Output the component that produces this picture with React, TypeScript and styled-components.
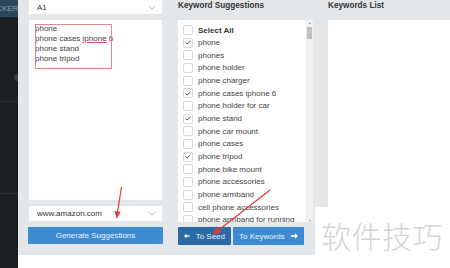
import styled, { createGlobalStyle } from 'styled-components';

const GlobalStyle = createGlobalStyle`
  html, body {
    margin: 0;
    padding: 0;
    background: #ffffff;
  }
  body {
    font-family: 'Liberation Sans', Arial, sans-serif;
  }
`;

type Suggestion = {
  text: string;
  checked?: boolean;
};

const suggestions: Suggestion[] = [
  { text: 'phone', checked: true },
  { text: 'phones' },
  { text: 'phone holder' },
  { text: 'phone charger' },
  { text: 'phone cases iphone 6', checked: true },
  { text: 'phone holder for car' },
  { text: 'phone stand', checked: true },
  { text: 'phone car mount' },
  { text: 'phone cases' },
  { text: 'phone tripod', checked: true },
  { text: 'phone bike mount' },
  { text: 'phone accessories' },
  { text: 'phone armband' },
  { text: 'cell phone accessories' },
  { text: 'phone armband for running' },
];

const Page = styled.div`
  position: relative;
  display: flex;
  width: 450px;
  height: 268px;
  overflow: hidden;
`;

const Sidebar = styled.aside`
  width: 18px;
  flex-shrink: 0;
  display: flex;
  flex-direction: column;
  background: #1c1f22;
  overflow: hidden;
`;

const Brand = styled.div`
  height: 17px;
  display: flex;
  justify-content: flex-end;
  align-items: center;
  background: #2b4658;
  color: #7f9cb1;
  font-size: 8px;
  letter-spacing: -0.2px;
  white-space: nowrap;
`;

const SideSection = styled.div<{ $h: number }>`
  height: ${(p) => p.$h}px;
  border-bottom: 1px solid #2b2f34;
  display: flex;
  justify-content: flex-end;
  align-items: flex-start;
`;

const Dot = styled.div`
  width: 7px;
  height: 7px;
  margin-top: 57px;
  margin-right: -3px;
  border-radius: 50%;
  background: #3b3f44;
`;

const Main = styled.main`
  flex: 1;
  display: flex;
  flex-direction: column;
`;

const Workspace = styled.div`
  height: 255px;
  background: #e4e7ea;
  display: grid;
  grid-template-columns: 135px 135px 1fr;
  column-gap: 15px;
  padding-left: 10px;
  box-sizing: border-box;
`;

const Column = styled.section`
  display: flex;
  flex-direction: column;
  min-width: 0;
`;

const Select = styled.div<{ $h: number; $mt?: number }>`
  height: ${(p) => p.$h}px;
  margin-top: ${(p) => p.$mt ?? 0}px;
  margin-left: 1px;
  margin-right: 1px;
  background: #ffffff;
  display: flex;
  align-items: center;
  justify-content: space-between;
  padding: 0 6px 0 8px;
  font-size: 8px;
  color: #333;
  flex-shrink: 0;
`;

const Chevron = () => (
  <svg width="8" height="5" viewBox="0 0 8 5">
    <polyline points="0.5,0.8 4,4.2 7.5,0.8" fill="none" stroke="#9a9ea3" strokeWidth="0.8" />
  </svg>
);

const SeedBox = styled.div`
  position: relative;
  height: 180px;
  margin: 6px 1px 0;
  background: #ffffff;
  padding: 4px 6px;
  box-sizing: border-box;
  font-size: 8px;
  line-height: 10px;
  color: #444;
`;

const SeedLine = styled.div`
  white-space: nowrap;
`;

const Misspelled = styled.span`
  text-decoration: underline;
  text-decoration-color: #d9534f;
  text-decoration-thickness: 1px;
  text-underline-offset: 1px;
`;

const Highlight = styled.div`
  position: absolute;
  left: 6px;
  top: 4px;
  width: 77px;
  height: 45px;
  border: 1px solid #e58a8a;
  box-sizing: border-box;
`;

const Button = styled.button<{ $tone: 'primary' | 'dark' }>`
  height: 18px;
  border: none;
  border-radius: 1px;
  padding: 0 6px;
  background: ${(p) => (p.$tone === 'dark' ? '#2c6aa5' : '#3e8bd2')};
  color: #e6f0fa;
  font-family: 'Liberation Sans', Arial, sans-serif;
  font-size: 8px;
  display: flex;
  align-items: center;
  justify-content: center;
  gap: 6px;
  white-space: nowrap;
`;

const WideButton = styled(Button)`
  margin-top: 6px;
  height: 17px;
`;

const Heading = styled.h3`
  height: 20px;
  margin: 0;
  padding-top: 1px;
  box-sizing: border-box;
  font-size: 8.2px;
  font-weight: bold;
  color: #333;
`;

const ListBox = styled.div`
  height: 202px;
  background: #ffffff;
  display: flex;
  overflow: hidden;
`;

const List = styled.div`
  flex: 1;
  padding: 3.7px 0 0 5px;
  overflow: hidden;
`;

const Row = styled.label<{ $bold?: boolean }>`
  height: 12.67px;
  display: flex;
  align-items: center;
  gap: 5px;
  font-size: 8px;
  font-weight: ${(p) => (p.$bold ? 'bold' : 'normal')};
  color: ${(p) => (p.$bold ? '#333' : '#444')};
  white-space: nowrap;
`;

const Box = styled.span`
  width: 8px;
  height: 8px;
  flex-shrink: 0;
  border: 1px solid #d6d9dc;
  border-radius: 2px;
  display: flex;
  align-items: center;
  justify-content: center;
`;

const Scrollbar = styled.div`
  width: 7px;
  background: #f1f1f1;
  display: flex;
  flex-direction: column;
  align-items: center;
  padding-top: 2px;
`;

const ScrollArrow = styled.div<{ $up?: boolean }>`
  width: 0;
  height: 0;
  border-left: 1.5px solid transparent;
  border-right: 1.5px solid transparent;
  ${(p) => (p.$up ? 'border-bottom: 2px solid #a0a0a0;' : 'border-top: 2px solid #a0a0a0;')}
`;

const Thumb = styled.div`
  width: 5px;
  height: 12px;
  margin-top: 3px;
  background: #c1c1c1;
`;

const ScrollSpacer = styled.div`
  flex: 1;
`;

const ButtonRow = styled.div`
  display: flex;
  gap: 2px;
  margin-top: 5px;
  padding-right: 10px;
`;

const SeedButton = styled(Button)`
  width: 53px;
`;

const KeywordsButton = styled(Button)`
  flex: 1;
`;

const KeywordPanel = styled.div`
  flex: 1;
  background: #ffffff;
`;

const Footer = styled.div`
  flex: 1;
  background: #ffffff;
`;

const Annotations = styled.svg`
  position: absolute;
  left: 0;
  top: 0;
  pointer-events: none;
`;

const Watermark = styled.div`
  position: absolute;
  left: 315px;
  top: 207px;
  width: 135px;
  height: 61px;
  background: #ffffff;
  display: flex;
  align-items: flex-start;
  padding: 10px 0 0 6px;
  box-sizing: border-box;
  font-family: 'Noto Sans CJK SC', sans-serif;
  font-size: 30px;
  font-weight: 300;
  line-height: 36px;
  letter-spacing: 0.5px;
  color: #d4d4d4;
`;

const Check = () => (
  <svg width="6" height="5" viewBox="0 0 6 5">
    <polyline points="0.6,2.6 2.2,4 5.4,0.8" fill="none" stroke="#444" strokeWidth="1" />
  </svg>
);

const ArrowLeft = () => (
  <svg width="7" height="6" viewBox="0 0 7 6">
    <path d="M0 3 L3 0 L3 2 L7 2 L7 4 L3 4 L3 6 Z" fill="#e6f0fa" />
  </svg>
);

const ArrowRight = () => (
  <svg width="7" height="6" viewBox="0 0 7 6">
    <path d="M7 3 L4 0 L4 2 L0 2 L0 4 L4 4 L4 6 Z" fill="#e6f0fa" />
  </svg>
);

const App = () => (
  <Page>
    <GlobalStyle />
    <Sidebar>
      <Brand>TRACKER</Brand>
      <SideSection $h={84}>
        <Dot />
      </SideSection>
      <SideSection $h={91} />
    </Sidebar>
    <Main>
      <Workspace>
        <Column>
          <Select $h={14}>
            A1
            <Chevron />
          </Select>
          <SeedBox>
            <SeedLine>phone</SeedLine>
            <SeedLine>
              phone cases <Misspelled>iphone</Misspelled> 6
            </SeedLine>
            <SeedLine>phone stand</SeedLine>
            <SeedLine>phone tripod</SeedLine>
            <Highlight />
          </SeedBox>
          <Select $h={15} $mt={6}>
            www.amazon.com
            <Chevron />
          </Select>
          <WideButton $tone="primary">Generate Suggestions</WideButton>
        </Column>

        <Column>
          <Heading>Keyword Suggestions</Heading>
          <ListBox>
            <List>
              <Row $bold>
                <Box />
                Select All
              </Row>
              {suggestions.map((s) => (
                <Row key={s.text}>
                  <Box>{s.checked && <Check />}</Box>
                  {s.text}
                </Row>
              ))}
            </List>
            <Scrollbar>
              <ScrollArrow $up />
              <Thumb />
              <ScrollSpacer />
              <ScrollArrow />
            </Scrollbar>
          </ListBox>
          <ButtonRow>
            <SeedButton $tone="dark">
              <ArrowLeft />
              To Seed
            </SeedButton>
            <KeywordsButton $tone="primary">
              To Keywords
              <ArrowRight />
            </KeywordsButton>
          </ButtonRow>
        </Column>

        <Column>
          <Heading>Keywords List</Heading>
          <KeywordPanel />
        </Column>
      </Workspace>
      <Footer />
    </Main>

    <Annotations width="450" height="268" viewBox="0 0 450 268">
      <line x1="121.5" y1="187" x2="117.5" y2="212" stroke="#e03b3b" strokeWidth="1.2" />
      <polygon points="114.5,211 120.5,211.8 116.8,219" fill="#e03b3b" />
      <line x1="270" y1="190" x2="220" y2="229" stroke="#e03b3b" strokeWidth="1.2" />
      <polygon points="216,226 222,232 213.5,235" fill="#e03b3b" />
    </Annotations>

    <Watermark>软件技巧</Watermark>
  </Page>
);

export default App;
